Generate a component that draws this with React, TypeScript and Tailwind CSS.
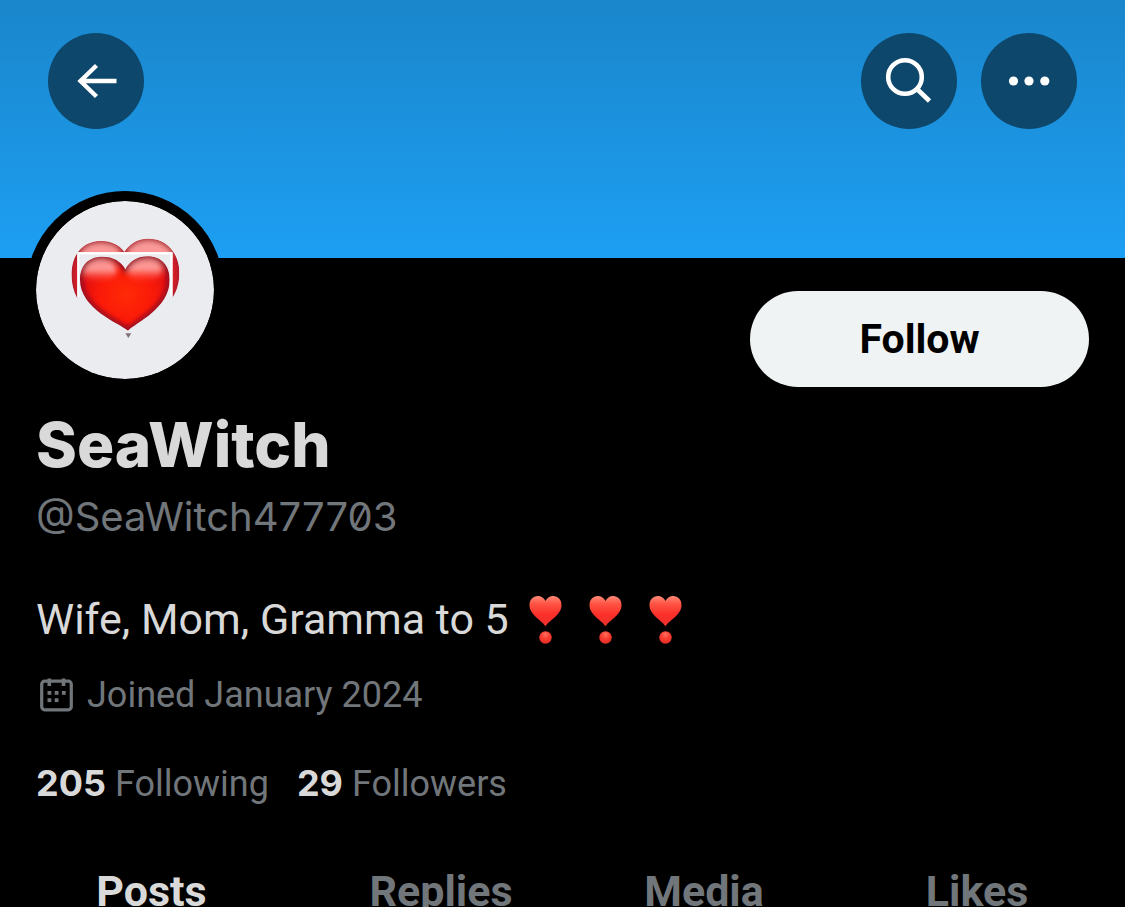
import { useState } from "react";

const TABS = ["Posts", "Replies", "Media", "Likes"];

const ROUND_BUTTON =
  "flex size-24 items-center justify-center rounded-full bg-[#0d476b] text-white";

function BackIcon() {
  return (
    <svg viewBox="0 0 96 96" className="size-24" fill="none" stroke="currentColor" strokeWidth="4.4" aria-hidden="true">
      <path d="M68.500 48H32M48.500 32.500L32.500 48L48.500 63.500" />
    </svg>
  );
}

function SearchIcon() {
  return (
    <svg viewBox="0 0 96 96" className="size-24" fill="none" stroke="currentColor" strokeWidth="4.600" aria-hidden="true">
      <circle cx="44" cy="44" r="16.800" />
      <path d="M56 56L68.500 68" />
    </svg>
  );
}

function MoreIcon() {
  return (
    <svg viewBox="0 0 96 96" className="size-24" fill="currentColor" aria-hidden="true">
      <circle cx="32.500" cy="48" r="4.600" />
      <circle cx="48" cy="48" r="4.600" />
      <circle cx="63.800" cy="48" r="4.600" />
    </svg>
  );
}

function CalendarIcon() {
  return (
    <svg viewBox="0 0 33 34" className="h-[34px] w-[33px]" aria-hidden="true">
      <rect x="1.700" y="3.200" width="29.600" height="28.600" rx="3" fill="none" stroke="currentColor" strokeWidth="3.200" />
      <g fill="currentColor">
        <rect x="7.500" y="0.500" width="3.600" height="7.500" />
        <rect x="21.700" y="0.500" width="3.600" height="7.500" />
        <rect x="7.500" y="13" width="3.800" height="3.800" />
        <rect x="14.700" y="13" width="3.800" height="3.800" />
        <rect x="21.900" y="13" width="3.800" height="3.800" />
        <rect x="7.500" y="20.300" width="3.800" height="3.800" />
        <rect x="14.700" y="20.300" width="3.800" height="3.800" />
      </g>
    </svg>
  );
}

function HeartExclamation() {
  return (
    <svg viewBox="0 0 33 50" className="h-[50px] w-[33px]" aria-hidden="true">
      <defs>
        <linearGradient id="heart-mark" x1="0" y1="0" x2="0" y2="1">
          <stop offset="0" stopColor="#ff8a78" />
          <stop offset="0.25" stopColor="#ff5546" />
          <stop offset="0.6" stopColor="#fb3029" />
          <stop offset="1" stopColor="#e9302a" />
        </linearGradient>
        <radialGradient id="heart-dot" cx="0.5" cy="0.25" r="0.75">
          <stop offset="0" stopColor="#ff6f5c" />
          <stop offset="0.5" stopColor="#fa3b30" />
          <stop offset="1" stopColor="#e22f27" />
        </radialGradient>
      </defs>
      <path
        d="M16.500 31.500C14 26 0.500 20.500 0.500 10C0.500 4.500 4.300 1 8.700 1C12.300 1 15.200 3 16.500 6C17.800 3 20.700 1 24.300 1C28.700 1 32.500 4.500 32.500 10C32.500 20.500 19 26 16.500 31.500Z"
        fill="url(#heart-mark)"
      />
      <circle cx="16.500" cy="42.500" r="6.200" fill="url(#heart-dot)" />
    </svg>
  );
}

const BACK_HEART =
  "M172 355C158 330 153 300 155 272C160 215 195 183 243 183C275 183 298 195 313 216C330 190 355 175 387 176C440 177 478 220 478 278C478 306 471 332 458 352Z";
const FRONT_HEART =
  "M324 452C300 430 180 388 180 299C180 255 207 230 247 230C280 230 303 244 316 268C330 243 352 229 383 229C424 229 449 257 449 300C449 385 348 428 324 452Z";

function Avatar() {
  return (
    <svg viewBox="48 63 534 534" className="size-full" role="img" aria-label="SeaWitch">
      <defs>
        <radialGradient id="av-front" gradientUnits="userSpaceOnUse" cx="318" cy="345" r="155">
          <stop offset="0" stopColor="#ff2a06" />
          <stop offset="0.5" stopColor="#fb1a08" />
          <stop offset="1" stopColor="#d80a14" />
        </radialGradient>
        <linearGradient id="av-shine" x1="0" y1="0" x2="0" y2="1">
          <stop offset="0" stopColor="#f58a8a" />
          <stop offset="0.45" stopColor="#ff9c98" />
          <stop offset="1" stopColor="#ff3a28" stopOpacity="0" />
        </linearGradient>
        <filter id="av-soft" x="-30%" y="-30%" width="160%" height="160%">
          <feGaussianBlur stdDeviation="8" />
        </filter>
        <clipPath id="av-back-clip">
          <path d={BACK_HEART} />
        </clipPath>
        <clipPath id="av-front-clip">
          <path d={FRONT_HEART} />
        </clipPath>
      </defs>
      <rect x="48" y="63" width="534" height="534" fill="#ebecf0" />
      <g clipPath="url(#av-back-clip)">
        <path d={BACK_HEART} fill="#e0222a" />
        <g filter="url(#av-soft)">
          <ellipse cx="242" cy="222" rx="58" ry="34" fill="#f99896" />
          <ellipse cx="390" cy="214" rx="66" ry="34" fill="#f99896" />
          <path d={BACK_HEART} fill="none" stroke="#9a1228" strokeWidth="12" />
        </g>
      </g>
      <path d="M172 217H458V360H172Z" fill="#ebecf0" />
      <path d="M175 352V220H454V350" fill="none" stroke="#ffffff" strokeWidth="6" />
      <g clipPath="url(#av-front-clip)">
        <path d={FRONT_HEART} fill="url(#av-front)" />
        <g filter="url(#av-soft)">
          <ellipse cx="240" cy="272" rx="50" ry="36" fill="url(#av-shine)" />
          <ellipse cx="374" cy="270" rx="52" ry="37" fill="url(#av-shine)" />
          <path d={FRONT_HEART} fill="none" stroke="#8a0c26" strokeWidth="16" />
        </g>
      </g>
      <path d="M316 460H334L325 474Z" fill="#80737a" />
    </svg>
  );
}

export default function App() {
  const [tab, setTab] = useState("Posts");
  const [following, setFollowing] = useState(false);

  return (
    <div className="min-h-screen bg-black font-[Roboto,sans-serif] text-[#d9d9d9]">
      <header className="flex h-[258px] items-start justify-between bg-linear-to-b from-[#1a86cb] to-[#1d9ff3] px-12 pt-[33px]">
        <button type="button" aria-label="Back" className={ROUND_BUTTON}>
          <BackIcon />
        </button>
        <div className="flex gap-6">
          <button type="button" aria-label="Search" className={ROUND_BUTTON}>
            <SearchIcon />
          </button>
          <button type="button" aria-label="More" className={ROUND_BUTTON}>
            <MoreIcon />
          </button>
        </div>
      </header>

      <main>
        <section className="px-9">
          <div className="flex items-start justify-between">
            <div className="-mt-[67px] -ml-2.5 size-[198px] overflow-hidden rounded-full border-10 border-black bg-black">
              <div className="size-full overflow-hidden rounded-full">
                <Avatar />
              </div>
            </div>
            <button
              type="button"
              onClick={() => setFollowing(!following)}
              className="mt-[33px] h-24 w-[339px] rounded-full bg-[#eff3f4] pt-0.5 text-[41px] font-bold text-black"
            >
              {following ? "Following" : "Follow"}
            </button>
          </div>

          <h1 className="mt-5 font-[Inter,sans-serif] text-[62px] leading-[72px] font-extrabold">SeaWitch</h1>
          <p className="mt-2 font-[Inter,sans-serif] text-[40px] leading-[56px] text-[#71767b] slashed-zero">
            @SeaWitch477703
          </p>

          <p className="mt-11 flex items-center text-[43px] leading-[60px]">
            <span>Wife, Mom, Gramma to 5</span>
            <span className="ml-5 flex gap-[27px] pt-0.5">
              <HeartExclamation />
              <HeartExclamation />
              <HeartExclamation />
            </span>
          </p>

          <p className="mt-5 flex items-center gap-3.5 pl-1 text-[36px] leading-[52px] text-[#71767b]">
            <CalendarIcon />
            <span>Joined January 2024</span>
          </p>

          <div className="mt-9 flex gap-7 text-[36px] leading-[52px] text-[#71767b]">
            <a href="#following">
              <strong className="font-[Inter,sans-serif] font-bold text-[#d9d9d9]">205</strong> Following
            </a>
            <a href="#followers">
              <strong className="font-[Inter,sans-serif] font-bold text-[#d9d9d9]">29</strong> Followers
            </a>
          </div>
        </section>

        <nav className="mt-[53px] grid grid-cols-[303fr_276fr_250fr_296fr]">
          {TABS.map((name) => (
            <button
              key={name}
              type="button"
              onClick={() => setTab(name)}
              className={`h-14 text-[43px] leading-[56px] font-bold ${
                tab === name ? "text-[#d9d9d9]" : "text-[#71767b]"
              }`}
            >
              {name}
            </button>
          ))}
        </nav>
      </main>
    </div>
  );
}
